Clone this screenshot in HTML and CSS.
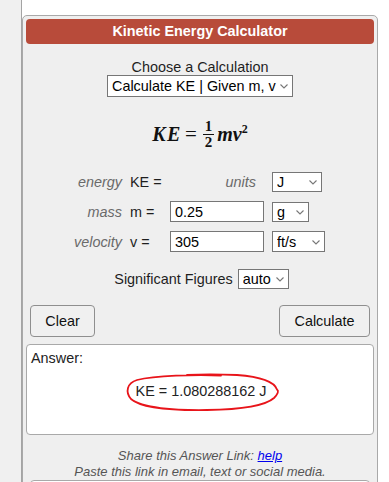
FILE: index.html
```html
<!DOCTYPE html>
<html lang="en">
<head>
  <meta charset="UTF-8">
  <title>Kinetic Energy Calculator</title>
  <link rel="stylesheet" href="styles.css">
</head>
<body>
  <div class="page">
    <div class="rail"></div>

    <div class="main">
      <div class="calc">
        <div class="calc-head">Kinetic Energy Calculator</div>

        <div class="choose">
          <div class="choose-label">Choose a Calculation</div>
          <div class="sel sel-calc">
            <select>
              <option>Calculate KE | Given m, v</option>
            </select>
            <svg class="chev" viewBox="0 0 8 5"><path d="M0.5 0.5 L4 4 L7.5 0.5" /></svg>
          </div>
        </div>

        <div class="formula">
          <span class="f-ke">KE</span>
          <span class="f-eq">=</span>
          <span class="frac">
            <span class="frac-top">1</span>
            <span class="frac-bot">2</span>
          </span>
          <span class="f-mv">mv<sup>2</sup></span>
        </div>

        <div class="fields">
          <span class="lbl">energy</span>
          <span class="sym">KE =</span>
          <span class="lbl lbl-units">units</span>
          <div class="sel sel-j">
            <select><option>J</option></select>
            <svg class="chev" viewBox="0 0 8 5"><path d="M0.5 0.5 L4 4 L7.5 0.5" /></svg>
          </div>

          <span class="lbl">mass</span>
          <span class="sym">m =</span>
          <input class="num" type="text" value="0.25">
          <div class="sel sel-g">
            <select><option>g</option></select>
            <svg class="chev" viewBox="0 0 8 5"><path d="M0.5 0.5 L4 4 L7.5 0.5" /></svg>
          </div>

          <span class="lbl">velocity</span>
          <span class="sym">v =</span>
          <input class="num" type="text" value="305">
          <div class="sel sel-fts">
            <select><option>ft/s</option></select>
            <svg class="chev" viewBox="0 0 8 5"><path d="M0.5 0.5 L4 4 L7.5 0.5" /></svg>
          </div>
        </div>

        <div class="sigfig">
          <span>Significant Figures</span>
          <div class="sel sel-auto">
            <select><option>auto</option></select>
            <svg class="chev" viewBox="0 0 8 5"><path d="M0.5 0.5 L4 4 L7.5 0.5" /></svg>
          </div>
        </div>

        <div class="buttons">
          <button class="btn btn-clear">Clear</button>
          <button class="btn btn-calc">Calculate</button>
        </div>

        <div class="answer">
          <div class="answer-label">Answer:</div>
          <div class="answer-value">KE = 1.080288162 J</div>
          <svg class="circle" viewBox="0 0 156 40">
            <path d="M96 3.5 C70 2.5, 30 3.5, 12 8 C2 11, 0 20, 6 27 C16 36, 50 38.5, 82 38 C114 37.5, 140 34, 149 26 C153 22, 154 19, 152 17.5 C149 9, 132 4.5, 112 3 C100 2.5, 80 2, 62 3" />
          </svg>
        </div>

        <div class="share">
          <div>Share this Answer Link: <a href="#">help</a></div>
          <div>Paste this link in email, text or social media.</div>
        </div>

        <div class="link-box"></div>
      </div>
    </div>
  </div>
</body>
</html>
```

FILE: styles.css
```css
:root {
  --panel: #efefef;
  --rail: #f0f0f0;
  --line: #a9a9a9;
  --head: #b84b3a;
  --muted: #6a6a6a;
  --text: #1e1e1e;
  --field: #767676;
}

body {
  margin: 0;
  font-family: "Liberation Sans", Arial, sans-serif;
  font-size: 14.4px;
  color: var(--text);
  background: #fff;
  overflow: hidden;
}

.page {
  display: flex;
  height: 482px;
  overflow: hidden;
}

.rail {
  width: 21px;
  flex-shrink: 0;
  background: var(--rail);
  border-right: 1px solid #a4a4a4;
}

.main {
  padding-top: 15px;
}

.calc {
  width: 348px;
  padding: 3px 3px 0;
  background: var(--panel);
  border: 1px solid var(--line);
  border-radius: 5px;
  min-height: 462px;
}

.calc-head {
  height: 25px;
  line-height: 25px;
  text-align: center;
  background: var(--head);
  color: #fff;
  font-weight: bold;
  border-radius: 4px;
}

.choose {
  margin-top: 15px;
  display: flex;
  flex-direction: column;
  align-items: center;
}

.choose-label {
  line-height: 16px;
}

/* select boxes with a drawn chevron */
.sel {
  position: relative;
  display: inline-block;
}

.sel select {
  appearance: none;
  -webkit-appearance: none;
  display: block;
  box-sizing: border-box;
  margin: 0;
  padding: 0 0 0 4px;
  font-family: inherit;
  font-size: 14.4px;
  color: #000;
  background: #fff;
  border: 1px solid var(--field);
  border-radius: 0;
  outline: none;
}

.sel .chev {
  position: absolute;
  right: 5px;
  top: 50%;
  width: 8px;
  height: 5px;
  margin-top: -2px;
  fill: none;
  stroke: #777;
  stroke-width: 1.1;
  pointer-events: none;
}

.sel-calc select {
  width: 186px;
  height: 22px;
  padding-left: 4px;
}

.sel-j select {
  width: 50px;
  height: 20px;
}

.sel-g select {
  width: 37px;
  height: 20px;
}

.sel-fts select {
  width: 53px;
  height: 21px;
}

.sel-auto select {
  width: 51px;
  height: 20px;
  padding-left: 4px;
}

/* formula */
.formula {
  margin-top: 18px;
  display: flex;
  justify-content: center;
  align-items: center;
  font-family: "Liberation Serif", "Times New Roman", serif;
  font-weight: bold;
  font-size: 20px;
  color: #111;
  height: 38px;
}

.f-ke {
  font-style: italic;
  letter-spacing: 1.5px;
}

.f-eq {
  margin: 0 6px 0 3px;
  font-style: normal;
  font-weight: normal;
  font-size: 21px;
}

.frac {
  display: inline-flex;
  flex-direction: column;
  align-items: center;
  font-size: 15px;
  line-height: 13px;
  margin-right: 2px;
}

.frac-top {
  padding: 0 2px 1px;
  border-bottom: 1.5px solid #111;
}

.frac-bot {
  padding-top: 1px;
}

.f-mv {
  font-style: italic;
  margin-left: 1px;
}

.f-mv sup {
  font-size: 12px;
  font-style: normal;
  vertical-align: 8px;
  line-height: 0;
}

/* input grid */
.fields {
  margin-top: 19px;
  display: grid;
  grid-template-columns: 96px 48px 94px auto;
  row-gap: 9px;
  align-items: center;
}

.fields .sel {
  justify-self: start;
  margin-left: 8px;
}

.lbl {
  font-style: italic;
  color: var(--muted);
  text-align: right;
}

.sym {
  padding-left: 8px;
  white-space: nowrap;
}

.lbl-units {
  padding-right: 8px;
}

.num {
  box-sizing: border-box;
  width: 94px;
  height: 21px;
  margin: 0;
  padding: 0 4px;
  font-family: inherit;
  font-size: 14.4px;
  color: #000;
  background: #fff;
  border: 1px solid var(--field);
  border-radius: 0;
  outline: none;
}

.sigfig {
  margin-top: 17px;
  display: flex;
  justify-content: center;
  align-items: center;
  gap: 5px;
  padding-left: 3px;
}

.buttons {
  margin-top: 16px;
  padding: 0 4px;
  display: flex;
  justify-content: space-between;
}

.btn {
  height: 32px;
  margin: 0;
  font-family: inherit;
  font-size: 14.4px;
  color: #111;
  background: #f0f0f0;
  border: 1px solid #8f8f8f;
  border-radius: 4px;
}

.btn-clear {
  width: 65px;
}

.btn-calc {
  width: 91px;
}

.answer {
  position: relative;
  margin-top: 7px;
  height: 89px;
  background: #fff;
  border: 1px solid var(--line);
  border-radius: 4px;
}

.answer-label {
  padding: 5px 0 0 4px;
  line-height: 16px;
  color: #222;
}

.answer-value {
  margin-top: 17px;
  text-align: center;
  line-height: 16px;
  color: #222;
  padding-left: 2px;
}

.circle {
  position: absolute;
  left: 98px;
  top: 27px;
  width: 156px;
  height: 40px;
  fill: none;
  stroke: #e8141a;
  stroke-width: 1.8;
  stroke-linecap: round;
  stroke-linejoin: round;
}

.share {
  margin-top: 13px;
  text-align: center;
  font-size: 13px;
  font-style: italic;
  line-height: 15.5px;
  color: #555;
}

.share a {
  color: #0000ee;
}

.link-box {
  margin: 1px 4px 0;
  height: 30px;
  background: #fff;
  border: 1px solid var(--line);
  border-radius: 4px;
}
```
